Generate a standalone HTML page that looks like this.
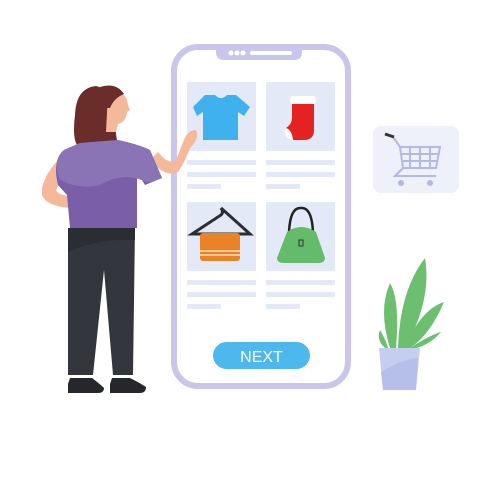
<!DOCTYPE html>
<html><head><style>body{margin:0;background:#fff}svg{display:block}</style></head><body>
<svg width="500" height="500" viewBox="0 0 500 500" xmlns="http://www.w3.org/2000/svg">
<!-- phone -->
<rect x="174" y="47" width="174" height="339" rx="24" fill="#fff" stroke="#c9c5ec" stroke-width="6"/>
<path d="M216 46 H302 V52 Q302 60 294 60 H224 Q216 60 216 52 Z" fill="#c9c5ec"/>
<circle cx="231" cy="53" r="2.5" fill="#fff"/><circle cx="237" cy="53" r="2.5" fill="#fff"/><circle cx="243" cy="53" r="2.5" fill="#fff"/>
<rect x="250" y="51" width="42" height="4" rx="2" fill="#fff"/>
<g fill="#e4e9f7">
<rect x="187" y="82" width="69" height="69"/><rect x="266" y="82" width="69" height="69"/>
<rect x="187" y="202" width="69" height="69"/><rect x="266" y="202" width="69" height="69"/>
<rect x="187" y="160" width="69" height="5"/><rect x="187" y="172" width="69" height="5"/><rect x="187" y="184" width="34" height="5"/>
<rect x="266" y="160" width="69" height="5"/><rect x="266" y="172" width="69" height="5"/><rect x="266" y="184" width="34" height="5"/>
<rect x="187" y="280" width="69" height="5"/><rect x="187" y="292" width="69" height="5"/><rect x="187" y="304" width="34" height="5"/>
<rect x="266" y="280" width="69" height="5"/><rect x="266" y="292" width="69" height="5"/><rect x="266" y="304" width="34" height="5"/>
</g>
<!-- shirt -->
<path d="M205 95 L215 95 Q221 101 227 95 L236 95 L250 107 L244 116 L238 112 L238 140 L203 140 L203 112 L197 116 L193 107 Z" fill="#3fb1ee"/>
<!-- sock -->
<rect x="290" y="96" width="26" height="8" rx="3" fill="#fff"/>
<path d="M292 104 H314 V130 Q314 140 304 140 H294 Q284 137 286 128 Q292 124 292 118 Z" fill="#e42222"/>
<path d="M286 128 Q292 130 293 140 Q282 138 286 128 Z" fill="#fff"/>
<!-- hanger + towel -->
<path d="M221 208 Q224 212 221 215 L192 234 H250 Z" fill="none" stroke="#2b2d33" stroke-width="3"/>
<rect x="200" y="233" width="40" height="28" rx="3" fill="#ea8227"/>
<rect x="200" y="250" width="40" height="2" fill="#f6c89a"/><rect x="200" y="254" width="40" height="2" fill="#f6c89a"/>
<!-- bag -->
<path d="M289 233 Q290 207 301 208 Q312 207 313 233" fill="none" stroke="#222" stroke-width="2.5"/>
<path d="M287 232 Q301 222 316 232 L325 258 Q325 263 318 263 H284 Q277 263 277 258 Z" fill="#64bb6a"/>
<rect x="299" y="240" width="4" height="6" fill="none" stroke="#333" stroke-width="1"/>
<!-- next -->
<rect x="213" y="342" width="97" height="27" rx="13.5" fill="#4db8ee"/>
<text x="261.5" y="362" text-anchor="middle" font-family="Liberation Sans, sans-serif" font-size="16" fill="#fff">NEXT</text>
<!-- woman -->
<!-- left arm -->
<path d="M58 160 Q40 180 42 195 Q46 206 70 208 L74 196 Q58 196 56 190 L66 170 Z" fill="#f6b89a"/>
<!-- right arm -->
<path d="M150 160 Q165 178 178 172 Q186 160 190 148 Q200 138 196 130 Q188 130 184 140 L176 160 Q168 165 158 152 Z" fill="#f6b89a"/>
<!-- hair back -->
<path d="M96 86 Q76 88 75 115 Q72 140 78 146 L118 146 Q115 130 114 115 Q115 90 96 86 Z" fill="#6b2d29"/>
<!-- face -->
<path d="M108 92 Q122 88 127 100 Q128 106 130 110 L127 112 Q126 122 118 124 L116 132 L106 132 Z" fill="#f6b89a"/>
<path d="M100 87 Q116 82 124 94 Q114 98 110 108 L104 108 Z" fill="#6b2d29"/>
<!-- shirt -->
<path d="M80 143 L118 140 Q140 145 150 150 L162 178 L145 185 L137 172 L137 228 L70 228 L67 195 L58 185 Q52 160 64 150 Z" fill="#7b5ea8"/>
<path d="M80 143 L118 140 Q140 145 150 150 L162 178 L148 183 Q125 170 100 185 Q80 190 60 180 Q52 160 64 150 Z" fill="#8a74b5"/>
<!-- pants -->
<path d="M68 228 H135 L133 375 H113 L104 270 L93 375 H68 Z" fill="#33373d"/>
<path d="M68 228 H135 V240 Q100 238 68 252 Z" fill="#2a2d31"/>
<!-- shoes -->
<path d="M70 378 H92 Q100 384 104 388 Q104 393 98 393 H68 V384 Z" fill="#24272b"/>
<path d="M112 378 H130 Q140 383 146 387 Q146 393 140 393 H110 V384 Z" fill="#24272b"/>
<!-- cart -->
<rect x="373" y="126" width="86" height="67" rx="8" fill="#eef0fa"/>
<g fill="none" stroke="#b3b8e6" stroke-width="2">
<path d="M393 137 L400 147 H440 L436 168 H403 L395 176 H436"/>
<path d="M400 147 L403 168 M410 147 V168 M420 147 V168 M430 147 V168 M401 154 H438 M402 161 H437"/>
</g>
<path d="M385 134 L394 137" stroke="#333" stroke-width="3"/>
<circle cx="401" cy="183" r="3" fill="#b3b8e6"/><circle cx="430" cy="183" r="3" fill="#b3b8e6"/>
<!-- plant -->
<g fill="#6cbf6e">
<path d="M390 348 Q378 310 390 283 Q400 300 396 348 Z"/>
<path d="M398 348 Q400 290 425 258 Q432 300 405 348 Z"/>
<path d="M405 348 Q420 310 444 302 Q430 335 410 348 Z"/>
<path d="M410 348 Q430 335 441 332 Q430 345 413 349 Z"/>
<path d="M385 348 Q376 340 380 330 Q386 340 388 348 Z"/>
</g>
<path d="M379 348 H420 L416 390 H383 Z" fill="#c5cdf0"/>
<path d="M381 372 Q400 360 418 358 L416 390 H383 Z" fill="#b6bfea"/>
</svg>
</body></html>
